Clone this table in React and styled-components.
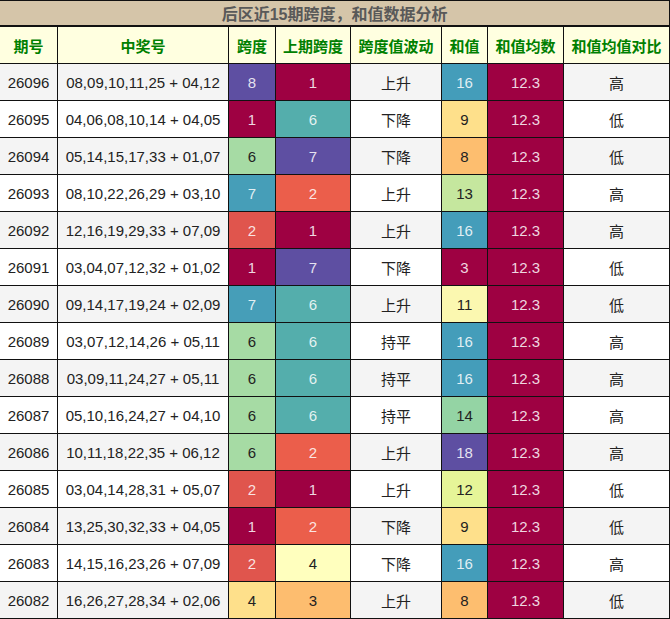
import styled, { createGlobalStyle } from "styled-components";

const GlobalStyle = createGlobalStyle`
    body {
        margin: 0;
        background: #ffffff;
        font-family: "Liberation Sans", "Noto Sans CJK SC", sans-serif;
    }
`;

const rows = [
    ["26096", "08,09,10,11,25 + 04,12", 8, 1, "上升", 16, "高"],
    ["26095", "04,06,08,10,14 + 04,05", 1, 6, "下降", 9, "低"],
    ["26094", "05,14,15,17,33 + 01,07", 6, 7, "下降", 8, "低"],
    ["26093", "08,10,22,26,29 + 03,10", 7, 2, "上升", 13, "高"],
    ["26092", "12,16,19,29,33 + 07,09", 2, 1, "上升", 16, "高"],
    ["26091", "03,04,07,12,32 + 01,02", 1, 7, "下降", 3, "低"],
    ["26090", "09,14,17,19,24 + 02,09", 7, 6, "上升", 11, "低"],
    ["26089", "03,07,12,14,26 + 05,11", 6, 6, "持平", 16, "高"],
    ["26088", "03,09,11,24,27 + 05,11", 6, 6, "持平", 16, "高"],
    ["26087", "05,10,16,24,27 + 04,10", 6, 6, "持平", 14, "高"],
    ["26086", "10,11,18,22,35 + 06,12", 6, 2, "上升", 18, "高"],
    ["26085", "03,04,14,28,31 + 05,07", 2, 1, "上升", 12, "低"],
    ["26084", "13,25,30,32,33 + 04,05", 1, 2, "下降", 9, "低"],
    ["26083", "14,15,16,23,26 + 07,09", 2, 4, "下降", 16, "高"],
    ["26082", "16,26,27,28,34 + 02,06", 4, 3, "上升", 8, "低"],
];

// colour scales per column: [background, light text?]
const spanColors = {
    1: ["#9e0142", true],
    2: ["#e0554d", true],
    4: ["#fee08b", false],
    6: ["#a6dba4", false],
    7: ["#469eb8", true],
    8: ["#5e4fa2", true],
};

const prevColors = {
    1: ["#9e0142", true],
    2: ["#eb5e4b", true],
    3: ["#fdbd6f", false],
    4: ["#ffffbe", false],
    6: ["#54aeac", true],
    7: ["#5e4fa2", true],
};

const sumColors = {
    3: ["#9e0142", true],
    8: ["#fdbe6f", false],
    9: ["#fee08b", false],
    11: ["#fbf8b0", false],
    12: ["#e6f598", false],
    13: ["#c5e79e", false],
    14: ["#94d4a4", false],
    16: ["#449dba", true],
    18: ["#5e4fa2", true],
};

const headers = ["期号", "中奖号", "跨度", "上期跨度", "跨度值波动", "和值", "和值均数", "和值均值对比"];
const widths = [58, 171, 47, 75, 91, 46, 76, 106];

function App() {
    return (
        <>
            <GlobalStyle />
            <Wrapper>
                <Table>
                    <colgroup>
                        {widths.map((w, i) => (
                            <col key={i} style={{ width: w }} />
                        ))}
                    </colgroup>
                    <thead>
                        <tr>
                            <Title colSpan={8}>后区近15期跨度，和值数据分析</Title>
                        </tr>
                        <tr>
                            {headers.map((h) => (
                                <HeadCell key={h}>{h}</HeadCell>
                            ))}
                        </tr>
                    </thead>
                    <tbody>
                        {rows.map((r, i) => (
                            <Row key={r[0]} $odd={i % 2 === 0}>
                                <Cell>{r[0]}</Cell>
                                <Cell>{r[1]}</Cell>
                                <ColorCell $bg={spanColors[r[2]][0]} $light={spanColors[r[2]][1]}>
                                    {r[2]}
                                </ColorCell>
                                <ColorCell $bg={prevColors[r[3]][0]} $light={prevColors[r[3]][1]}>
                                    {r[3]}
                                </ColorCell>
                                <Cell>{r[4]}</Cell>
                                <ColorCell $bg={sumColors[r[5]][0]} $light={sumColors[r[5]][1]}>
                                    {r[5]}
                                </ColorCell>
                                <ColorCell $bg="#9e0142" $light>
                                    12.3
                                </ColorCell>
                                <Cell>{r[6]}</Cell>
                            </Row>
                        ))}
                    </tbody>
                </Table>
            </Wrapper>
        </>
    );
}

export default App;

const Wrapper = styled.div`
    width: 670px;
    overflow: hidden;
`;

const Table = styled.table`
    margin-left: -1px;
    width: 671px;
    table-layout: fixed;
    border-collapse: collapse;
    font-size: 15px;
    color: #222;
`;

const Title = styled.th`
    height: 24px;
    padding: 0;
    background: #d5c5a9;
    color: #595959;
    font-size: 16px;
    font-weight: bold;
    text-align: center;
    border: 1px solid #111;
    border-bottom: 2px solid #111;
`;

const HeadCell = styled.th`
    height: 36px;
    padding: 0;
    background: #ffffe0;
    color: #008000;
    font-weight: bold;
    text-align: center;
    border: 1px solid #111;
`;

const Row = styled.tr`
    background: ${(p) => (p.$odd ? "#f4f4f4" : "#ffffff")};
`;

const Cell = styled.td`
    height: 36px;
    padding: 0;
    text-align: center;
    border: 1px solid #111;
    white-space: nowrap;
`;

const ColorCell = styled(Cell)`
    background: ${(p) => p.$bg};
    color: ${(p) => (p.$light ? "rgba(255, 255, 255, 0.85)" : "#222")};
`;
